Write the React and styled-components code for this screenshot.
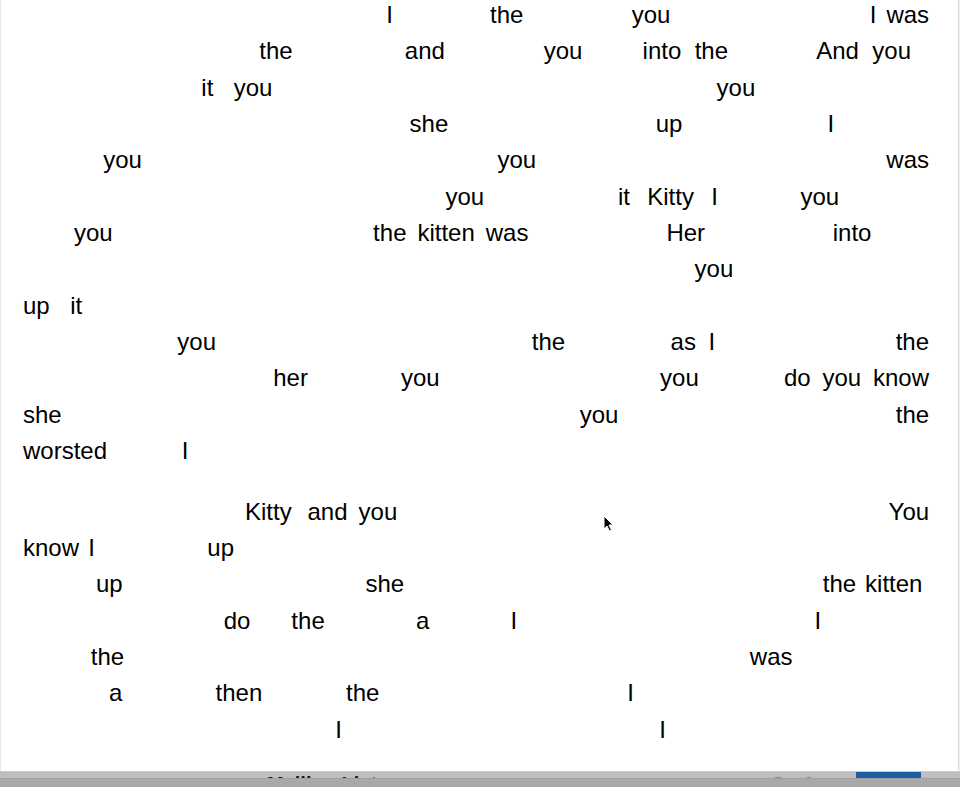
import React from "react";
import styled, { createGlobalStyle } from "styled-components";
import { Minus, Bold, Italic, Smile, Paperclip, ChevronUp } from "lucide-react";

const GlobalStyle = createGlobalStyle`
  * {
    box-sizing: border-box;
  }
  body {
    margin: 0;
    background: #f2f2f2;
    font-family: "Liberation Sans", Arial, Helvetica, sans-serif;
  }
`;

const Viewport = styled.div`
  width: 960px;
  height: 787px;
  overflow: hidden;
  display: flex;
  flex-direction: column;
  background: #f2f2f2;
`;

const Page = styled.div`
  position: relative;
  flex: 1;
  min-height: 0;
  overflow: hidden;
  margin-right: 1px;
  padding: 0 29px 0 22px;
  background: #ffffff;
  border-left: 1px solid #e8e8e8;
  border-right: 1px solid #d6d6d6;
`;

const Reading = styled.div`
  margin-top: -3px;
  font-size: 24px;
  line-height: 36.33px;
  color: #000;
`;

const Paragraph = styled.div`
  margin-bottom: 24.5px;
`;

const Line = styled.div`
  text-align: justify;
  text-align-last: ${(p) => (p.$last ? "left" : "justify")};
`;

const Word = styled.span`
  color: #000;
`;

const Ghost = styled.span`
  color: rgba(0, 0, 0, 0.018);
`;

const Cursor = styled.svg`
  position: absolute;
  left: 602px;
  top: 515px;
  width: 11px;
  height: 17px;
`;

const Footer = styled.div`
  flex-shrink: 0;
  height: 16px;
  display: flex;
  flex-direction: column;
`;

const Toolbar = styled.div`
  height: 7px;
  overflow: hidden;
  display: flex;
  align-items: flex-start;
  justify-content: space-between;
  padding: 0 39px 0 267px;
  background: #bebebe;
  border-top: 1px solid #cbcbcb;
`;

const ListTitle = styled.div`
  font-size: 20px;
  font-weight: 700;
  line-height: 23px;
  color: #1a1a1a;
  margin-top: 1px;
`;

const Tools = styled.div`
  display: flex;
  align-items: flex-start;
  gap: 12px;
  color: #8e8e8e;
`;

const ToolIcon = styled.span`
  display: flex;
  width: 16px;
  margin-top: 4px;
`;

const SendButton = styled.div`
  width: 65px;
  height: 20px;
  margin-left: 2px;
  margin-top: -1px;
  padding-top: 5px;
  background: #1f5da5;
  color: #fff;
  font-size: 15px;
  font-weight: 700;
  line-height: 17px;
  text-align: center;
`;

const LowerBand = styled.div`
  flex: 1;
  background: #a9a9a9;
  border-top: 1px solid #a0a0a0;
`;

const VISIBLE = new Set([
  "I", "the", "you", "You", "was", "and", "And", "into", "it", "she",
  "up", "Kitty", "kitten", "Her", "her", "as", "do", "know", "worsted",
  "a", "then",
]);

const paragraphs = [
  [
    "comfortably settled again, ‘when I saw all the mischief you had been doing, I was",
    "very nearly opening the window, and putting you out into the snow! And you'd",
    "have deserved it, you little mischievous darling! What have you got to say for",
    "yourself? Now don't interrupt me!’ she went on, holding up one finger. ‘I'm going",
    "to tell you all your faults. Number one: you squeaked twice while Dinah was",
    "washing your face this morning. Now you can't deny it, Kitty: I heard you! What's",
    "that you say?’ (pretending that the kitten was speaking.) ‘Her paw went into your",
    "eye? Well, that's your fault, for keeping your eyes open—if you'd shut them tight",
    "up, it wouldn't have happened. Now don't make any more excuses, but listen!",
    "Number two: you pulled Snowdrop away by the tail just as I had put down the",
    "saucer of milk before her! What, you were thirsty, were you? How do you know",
    "she wasn't thirsty too? Now for number three: you unwound every bit of the",
    "worsted, while I wasn't looking!",
  ],
  [
    "‘That’s three faults, Kitty, and you've not been punished for any of them yet. You",
    "know I'm saving up all your punishments for Wednesday week—Suppose they had",
    "saved up all MY punishments!’ she went on, talking more to herself than the kitten.",
    "‘What would they do at the end of a year? I should be sent to prison, I suppose,",
    "when the day came. Or—let me see—suppose each punishment was to be going",
    "without a dinner: then, when the miserable day came, I should have to go without",
    "fifty dinners at once! Well, I shouldn't mind that much! I'd far rather go without",
    "them than eat them!’",
  ],
];

const renderLine = (text) =>
  text.split(/([A-Za-z]+)/).map((piece, i) =>
    VISIBLE.has(piece) ? (
      <Word key={i}>{piece}</Word>
    ) : piece ? (
      <Ghost key={i}>{piece}</Ghost>
    ) : null
  );

const tools = [Minus, Bold, Italic, Smile, Paperclip, ChevronUp];

const App = () => {
  return (
    <>
      <GlobalStyle />
      <Viewport>
        <Page>
          <Reading>
            {paragraphs.map((lines, p) => (
              <Paragraph key={p}>
                {lines.map((line, i) => (
                  <Line key={i} $last={i === lines.length - 1}>
                    {renderLine(line)}
                  </Line>
                ))}
              </Paragraph>
            ))}
          </Reading>
          <Cursor viewBox="0 0 11 17">
            <path
              d="M1 1 L1 14 L4 11 L6.5 16 L8.5 15 L6 10 L10 10 Z"
              fill="#000"
              stroke="#fff"
              strokeWidth="1"
              strokeLinejoin="round"
            />
          </Cursor>
        </Page>
        <Footer>
          <Toolbar>
            <ListTitle>Mailing List</ListTitle>
            <Tools>
              {tools.map((Icon, i) => (
                <ToolIcon key={i}>
                  <Icon size={16} strokeWidth={2} />
                </ToolIcon>
              ))}
              <SendButton>New</SendButton>
            </Tools>
          </Toolbar>
          <LowerBand />
        </Footer>
      </Viewport>
    </>
  );
};

export default App;
